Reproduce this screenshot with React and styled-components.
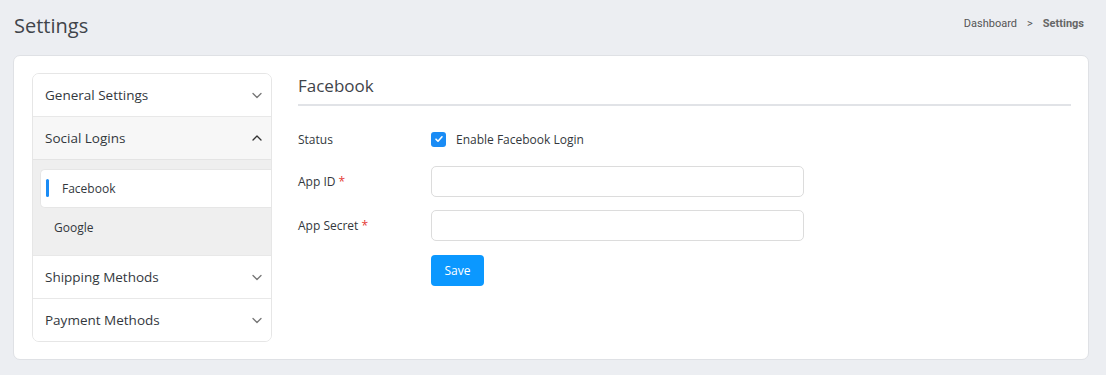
import React from 'react';
import styled, { createGlobalStyle } from 'styled-components';

const GlobalStyle = createGlobalStyle`
  body {
    margin: 0;
    background: #eceef2;
    font-family: "Open Sans", "Liberation Sans", sans-serif;
    color: #3a3f44;
  }
`;

const Page = styled.div`
  width: 1106px;
  height: 375px;
  box-sizing: border-box;
  padding: 0 17px 0 13px;
`;

const TopBar = styled.div`
  height: 55px;
  display: flex;
  align-items: center;
  justify-content: space-between;
  padding: 0 5px 4px 1px;
  box-sizing: border-box;
`;

const Title = styled.h1`
  margin: 0;
  font-size: 20px;
  font-weight: 400;
  color: #3f444a;
`;

const Crumbs = styled.div`
  display: flex;
  align-items: center;
  gap: 10px;
  font-family: Roboto, "Liberation Sans", sans-serif;
  font-size: 11px;
  color: #555;
  margin-top: -4px;
`;

const CrumbCurrent = styled.span`
  font-weight: 700;
  color: #666;
`;

const Card = styled.div`
  background: #fff;
  border: 1px solid #dfe1e5;
  border-radius: 7px;
  padding: 17px 17px 17px 18px;
  display: flex;
  gap: 26px;
  align-items: flex-start;
`;

const Accordion = styled.div`
  width: 238px;
  flex-shrink: 0;
  border: 1px solid #e6e6e6;
  border-radius: 7px;
  overflow: hidden;
`;

const Section = styled.div`
  & + & {
    border-top: 1px solid #e8e8e8;
  }
`;

const SectionHead = styled.div`
  height: 42px;
  display: flex;
  align-items: center;
  justify-content: space-between;
  padding: 0 8px 0 12px;
  font-size: 13.5px;
  color: #33383d;
  background: ${(p) => (p.open ? '#f7f7f7' : '#fff')};
  border-bottom: ${(p) => (p.open ? '1px solid #e4e4e4' : 'none')};
`;

const SubList = styled.div`
  background: #efefef;
  padding: 9px 0 8px 7px;
`;

const SubItem = styled.div`
  position: relative;
  height: 39px;
  box-sizing: border-box;
  display: flex;
  align-items: center;
  font-size: 12px;
  color: #33383d;
  padding-left: ${(p) => (p.active ? '21px' : '13px')};
  background: ${(p) => (p.active ? '#fff' : 'transparent')};
  border-radius: 5px 0 0 5px;
  border: ${(p) => (p.active ? '1px solid #e6e6e6' : '1px solid transparent')};
  border-right: none;
`;

const ActiveBar = styled.span`
  position: absolute;
  left: 5px;
  top: 9px;
  width: 3px;
  height: 18px;
  border-radius: 2px;
  background: #1a8cf5;
`;

const Content = styled.div`
  flex: 1;
`;

const Heading = styled.h2`
  margin: 0;
  padding: 1px 0 7px;
  font-size: 17px;
  font-weight: 400;
  color: #3f444a;
  border-bottom: 2px solid #e1e3e7;
`;

const Form = styled.div`
  padding-top: 23px;
  display: flex;
  flex-direction: column;
  gap: 13px;
`;

const Row = styled.div`
  display: flex;
  align-items: center;
  min-height: ${(p) => (p.tight ? '20px' : 'auto')};
  margin-bottom: ${(p) => (p.tight ? '4px' : '0')};
`;

const Label = styled.div`
  width: 133px;
  flex-shrink: 0;
  font-size: 12px;
  color: #33383d;
`;

const Req = styled.span`
  color: #e53935;
  margin-left: 3px;
`;

const CheckLabel = styled.label`
  display: flex;
  align-items: center;
  gap: 10px;
  font-size: 12px;
  color: #33383d;
`;

const Box = styled.span`
  width: 15px;
  height: 15px;
  border-radius: 3px;
  background: #1a8cf5;
  display: flex;
  align-items: center;
  justify-content: center;
`;

const Input = styled.input`
  width: 373px;
  height: 31px;
  box-sizing: border-box;
  border: 1px solid #dcdcdc;
  border-radius: 5px;
  outline: none;
  padding: 0 10px;
  font-family: inherit;
`;

const Button = styled.button`
  margin: 1px 0 0 133px;
  width: 53px;
  height: 31px;
  border: none;
  border-radius: 4px;
  background: #0b98ff;
  color: #fff;
  font-family: inherit;
  font-size: 12px;
  cursor: pointer;
`;

const Chevron = ({ up }) => (
  <svg width="12" height="12" viewBox="0 0 12 12" fill="none">
    <path
      d={up ? 'M2 8l4-4 4 4' : 'M2 4.5l4 4 4-4'}
      stroke={up ? '#333' : '#777'}
      strokeWidth="1.3"
      strokeLinecap="round"
      strokeLinejoin="round"
    />
  </svg>
);

const Check = () => (
  <svg width="10" height="10" viewBox="0 0 10 10" fill="none">
    <path d="M2 5.2l2 2 4-4.4" stroke="#fff" strokeWidth="1.6" strokeLinecap="round" strokeLinejoin="round" />
  </svg>
);

const App = () => {
  return (
    <Page>
      <GlobalStyle />
      <TopBar>
        <Title>Settings</Title>
        <Crumbs>
          <span>Dashboard</span>
          <span>&gt;</span>
          <CrumbCurrent>Settings</CrumbCurrent>
        </Crumbs>
      </TopBar>
      <Card>
        <Accordion>
          <Section>
            <SectionHead>
              General Settings
              <Chevron />
            </SectionHead>
          </Section>
          <Section>
            <SectionHead open>
              Social Logins
              <Chevron up />
            </SectionHead>
            <SubList>
              <SubItem active>
                <ActiveBar />
                Facebook
              </SubItem>
              <SubItem>Google</SubItem>
            </SubList>
          </Section>
          <Section>
            <SectionHead>
              Shipping Methods
              <Chevron />
            </SectionHead>
          </Section>
          <Section>
            <SectionHead>
              Payment Methods
              <Chevron />
            </SectionHead>
          </Section>
        </Accordion>
        <Content>
          <Heading>Facebook</Heading>
          <Form>
            <Row tight>
              <Label>Status</Label>
              <CheckLabel>
                <Box>
                  <Check />
                </Box>
                Enable Facebook Login
              </CheckLabel>
            </Row>
            <Row>
              <Label>
                App ID<Req>*</Req>
              </Label>
              <Input />
            </Row>
            <Row>
              <Label>
                App Secret<Req>*</Req>
              </Label>
              <Input />
            </Row>
            <Button>Save</Button>
          </Form>
        </Content>
      </Card>
    </Page>
  );
};

export default App;
